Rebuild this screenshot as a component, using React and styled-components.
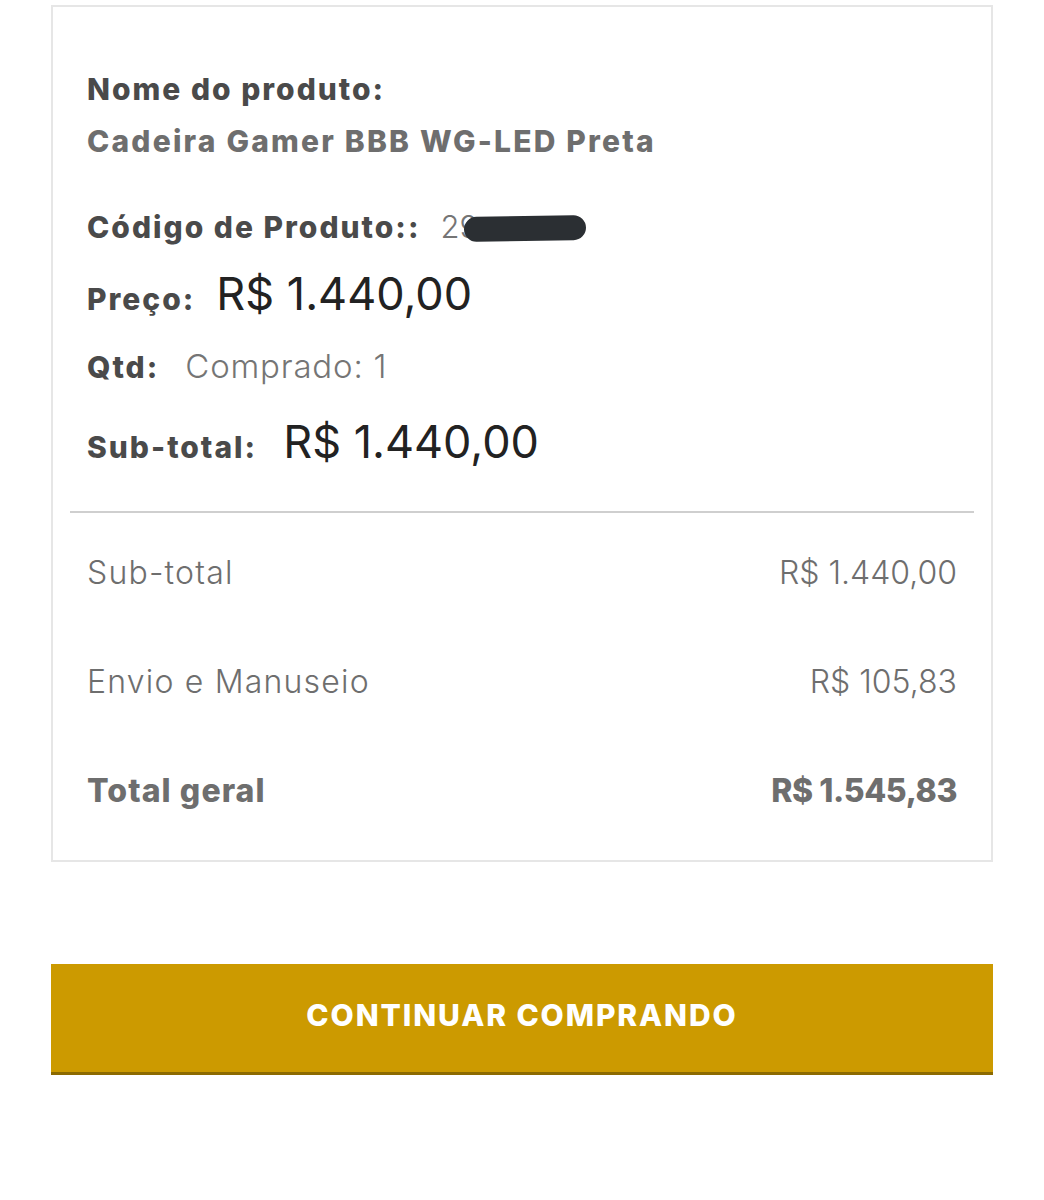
import React from 'react'
import styled, { createGlobalStyle } from 'styled-components'

const Global = createGlobalStyle`
    body {
        margin: 0;
        background: #ffffff;
        font-family: 'Inter', 'Noto Sans', sans-serif;
    }
`

const Page = styled.main`
    padding: 5px 51px 0;
    display: flex;
    flex-direction: column;
    gap: 102px;
`

const Card = styled.section`
    border: 2px solid #e6e6e6;
    padding: 0 17px;
`

const Details = styled.div`
    padding: 64px 17px 42px;
    border-bottom: 2px solid #cfcfcf;
    display: flex;
    flex-direction: column;
`

const Label = styled.span`
    font-weight: 800;
    font-size: 30px;
    color: #4a4a4a;
    letter-spacing: 2px;
`

const ProductName = styled.div`
    font-weight: 800;
    font-size: 30px;
    color: #6e6e6e;
    letter-spacing: 2.2px;
    margin-top: 16px;
`

const InfoRow = styled.div`
    display: flex;
    align-items: baseline;
    gap: ${p => p.gap || 26}px;
    margin-top: ${p => p.top || 0}px;
`

const Value = styled.span`
    font-size: ${p => p.size || 31}px;
    font-weight: ${p => p.weight || 400};
    color: ${p => p.color || '#757575'};
    letter-spacing: ${p => p.spacing || 0}px;
`

const Redacted = styled.span`
    display: inline-block;
    width: 122px;
    height: 25px;
    margin-left: -14px;
    background: #2b2f33;
    border-radius: 13px;
    vertical-align: -3px;
    transform: rotate(-1deg);
`

const Totals = styled.div`
    padding: 5px 17px 15px;
    display: flex;
    flex-direction: column;
`

const TotalRow = styled.div`
    display: flex;
    justify-content: space-between;
    align-items: center;
    height: 109px;
    font-size: 32px;
    font-weight: ${p => (p.strong ? 800 : 300)};
    color: #6e6e6e;
`

const RowLabel = styled.span`
    letter-spacing: ${p => (p.strong ? 1.1 : 1.2)}px;
`

const Amount = styled.span`
    letter-spacing: ${p => (p.strong ? -0.4 : 0)}px;
`

const Button = styled.button`
    width: 100%;
    height: 111px;
    padding: 0 0 6px;
    border: none;
    border-bottom: 3px solid #8c6a00;
    background: #cc9a00;
    color: #ffffff;
    font-family: 'Inter', 'Noto Sans', sans-serif;
    font-size: 30px;
    font-weight: 800;
    letter-spacing: 1.9px;
    cursor: pointer;
`

const App = () => {
    return (
        <>
            <Global />
            <Page>
                <Card>
                    <Details>
                        <Label>Nome do produto:</Label>
                        <ProductName>Cadeira Gamer BBB WG-LED Preta</ProductName>
                        <InfoRow top={49} gap={20}>
                            <Label>Código de Produto::</Label>
                            <Value weight={300}>29<Redacted /></Value>
                        </InfoRow>
                        <InfoRow top={21} gap={21}>
                            <Label>Preço:</Label>
                            <Value size={45} color="#222222">R$ 1.440,00</Value>
                        </InfoRow>
                        <InfoRow top={25}>
                            <Label>Qtd:</Label>
                            <Value size={33} weight={300} spacing={0.8}>Comprado: 1</Value>
                        </InfoRow>
                        <InfoRow top={28}>
                            <Label>Sub-total:</Label>
                            <Value size={45} color="#222222">R$ 1.440,00</Value>
                        </InfoRow>
                    </Details>
                    <Totals>
                        <TotalRow>
                            <RowLabel>Sub-total</RowLabel>
                            <Amount>R$ 1.440,00</Amount>
                        </TotalRow>
                        <TotalRow>
                            <RowLabel>Envio e Manuseio</RowLabel>
                            <Amount>R$ 105,83</Amount>
                        </TotalRow>
                        <TotalRow strong>
                            <RowLabel strong>Total geral</RowLabel>
                            <Amount strong>R$ 1.545,83</Amount>
                        </TotalRow>
                    </Totals>
                </Card>
                <Button>CONTINUAR COMPRANDO</Button>
            </Page>
        </>
    )
}

export default App
